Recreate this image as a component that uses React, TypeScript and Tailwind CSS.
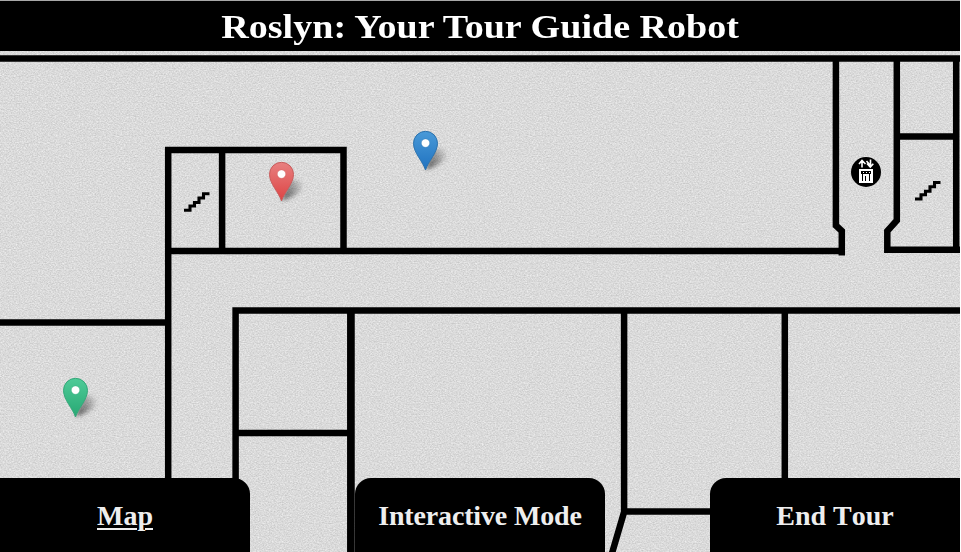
type PinProps = { id: string; x: number; y: number; top: string; bottom: string; edge: string };

const pins: PinProps[] = [
  { id: 'red', x: 281.5, y: 201.3, top: '#e88080', bottom: '#dd4343', edge: '#c85c5c' },
  { id: 'blue', x: 425.5, y: 170.3, top: '#4a9ad8', bottom: '#1f72c0', edge: '#2c72ad' },
  { id: 'green', x: 75.5, y: 417.3, top: '#4fcb98', bottom: '#27a873', edge: '#35a87a' },
];

function Pin({ id, x, y, top, bottom, edge }: PinProps) {
  return (
    <g transform={`translate(${x} ${y})`}>
      <defs>
        <linearGradient id={id} x1="0" y1="0" x2="0" y2="1">
          <stop offset="0" stopColor={top} />
          <stop offset="1" stopColor={bottom} />
        </linearGradient>
      </defs>
      <path d="M0 -1 L7 -19 C12 -24 23 -21 21 -14 C19 -8 7 -2 0 -1Z" fill="url(#pinShade)" filter="url(#soft)" />
      <path
        d="M0 -.3 C-2.4 -8.5 -12 -17.5 -12 -27 A12 12 0 0 1 12 -27 C12 -17.5 2.4 -8.5 0 -.3Z"
        fill={`url(#${id})`}
        stroke={edge}
        strokeWidth="1"
      />
      <circle cx="0" cy="-27.2" r="4.2" fill="#fff" stroke={edge} strokeOpacity=".5" strokeWidth=".7" />
    </g>
  );
}

function Stairs({ x, y }: { x: number; y: number }) {
  return (
    <path
      transform={`translate(${x} ${y})`}
      d="M0 18.2 H6 V14 H10.5 V10.5 H15 V6 H19.5 V1.7 H25.5"
      fill="none"
      stroke="#000"
      strokeWidth="3.1"
    />
  );
}

function Elevator() {
  return (
    <g transform="translate(851 157)">
      <circle cx="15" cy="15" r="15" fill="#000" />
      <path
        d="M11 10.5 V4 M8 7 L11 3.5 L14.5 7 M15.5 4 L19 8 M19.5 2.5 V9.5 M16 6.5 L19.3 10 L22.3 6.8"
        fill="none"
        stroke="#fff"
        strokeWidth="1.6"
      />
      <rect x="8" y="12" width="14" height="14" fill="#fff" />
      <path d="M10 14h10v3H10z" fill="#000" />
      <path d="M12 15h1v1h-1zM15 15h1v1h-1zM18 15h1v1h-1z" fill="#fff" />
      <path d="M11.5 17v7M14.5 19v5M18.5 17v7" stroke="#000" strokeWidth="1" />
    </g>
  );
}

function FloorMap() {
  return (
    <svg className="block h-full w-full" viewBox="0 51 961 501" aria-label="Floor map">
      <defs>
        <filter id="grain" x="0" y="0" width="100%" height="100%" colorInterpolationFilters="sRGB">
          <feTurbulence type="fractalNoise" baseFrequency="0.62 0.85" numOctaves="2" seed="7" />
          <feColorMatrix values=".22 0 0 0 .745  .22 0 0 0 .745  .22 0 0 0 .745  0 0 0 0 1" />
        </filter>
        <filter id="soft" x="-30%" y="-30%" width="160%" height="160%">
          <feGaussianBlur stdDeviation="1.9" />
        </filter>
        <linearGradient id="pinShade" x1="0" y1=".7" x2="1" y2=".3">
          <stop offset="0" stopColor="#000" stopOpacity=".6" />
          <stop offset="1" stopColor="#000" stopOpacity=".06" />
        </linearGradient>
      </defs>
      <rect x="0" y="51" width="960" height="501" filter="url(#grain)" />
      <g fill="none" stroke="#000" strokeWidth="6.5">
        <path d="M0 58.4H960" />
        <path d="M0 322.5H168" />
        <path d="M168.2 552V150H343.5V251" />
        <path d="M222.1 150V251M168 251H845" />
        <path d="M835.9 58V225.5L841.8 231V255.5" />
        <path d="M896.8 58V220.5L887.3 231V249.8H960" />
        <path d="M956.2 58V250M897 136.4H956" />
        <path d="M960 310.5H235.6V552" />
        <path d="M350.9 310V552" strokeWidth="7.7" />
        <path d="M236 433H351M784.8 310V480" />
        <path d="M624.1 310V512L611.5 555M624 511.4H712" />
      </g>
      <Stairs x={184} y={192} />
      <Stairs x={915} y={180.8} />
      <Elevator />
      {pins.map((pin) => (
        <Pin key={pin.id} {...pin} />
      ))}
    </svg>
  );
}

const tab =
  'flex h-[74px] w-[250px] items-center justify-center bg-black pt-[2px] font-["Liberation_Serif",serif] text-[28px] leading-none font-bold text-[#eee] [font-kerning:none]';

export default function App() {
  return (
    <div className="relative flex h-[552px] w-[961px] flex-col overflow-hidden bg-white">
      <header className="flex h-[51px] w-[960px] shrink-0 items-center justify-center border-t border-[#a8a8a8] bg-black pt-[2px]">
        <h1 className='scale-x-[1.12] whitespace-nowrap font-["Liberation_Serif",serif] text-[34px] leading-none font-bold text-white'>
          Roslyn: Your Tour Guide Robot
        </h1>
      </header>
      <main className="min-h-0 flex-1">
        <FloorMap />
      </main>
      <nav className="absolute bottom-0 left-0 flex w-[960px] justify-between">
        <a className={`${tab} rounded-tr-[16px]`}>
          <span className="underline decoration-2 underline-offset-[3px]">Map</span>
        </a>
        <a className={`${tab} rounded-t-[16px] tracking-[-0.15px]`}>Interactive Mode</a>
        <a className={`${tab} rounded-tl-[16px]`}>End Tour</a>
      </nav>
    </div>
  );
}
